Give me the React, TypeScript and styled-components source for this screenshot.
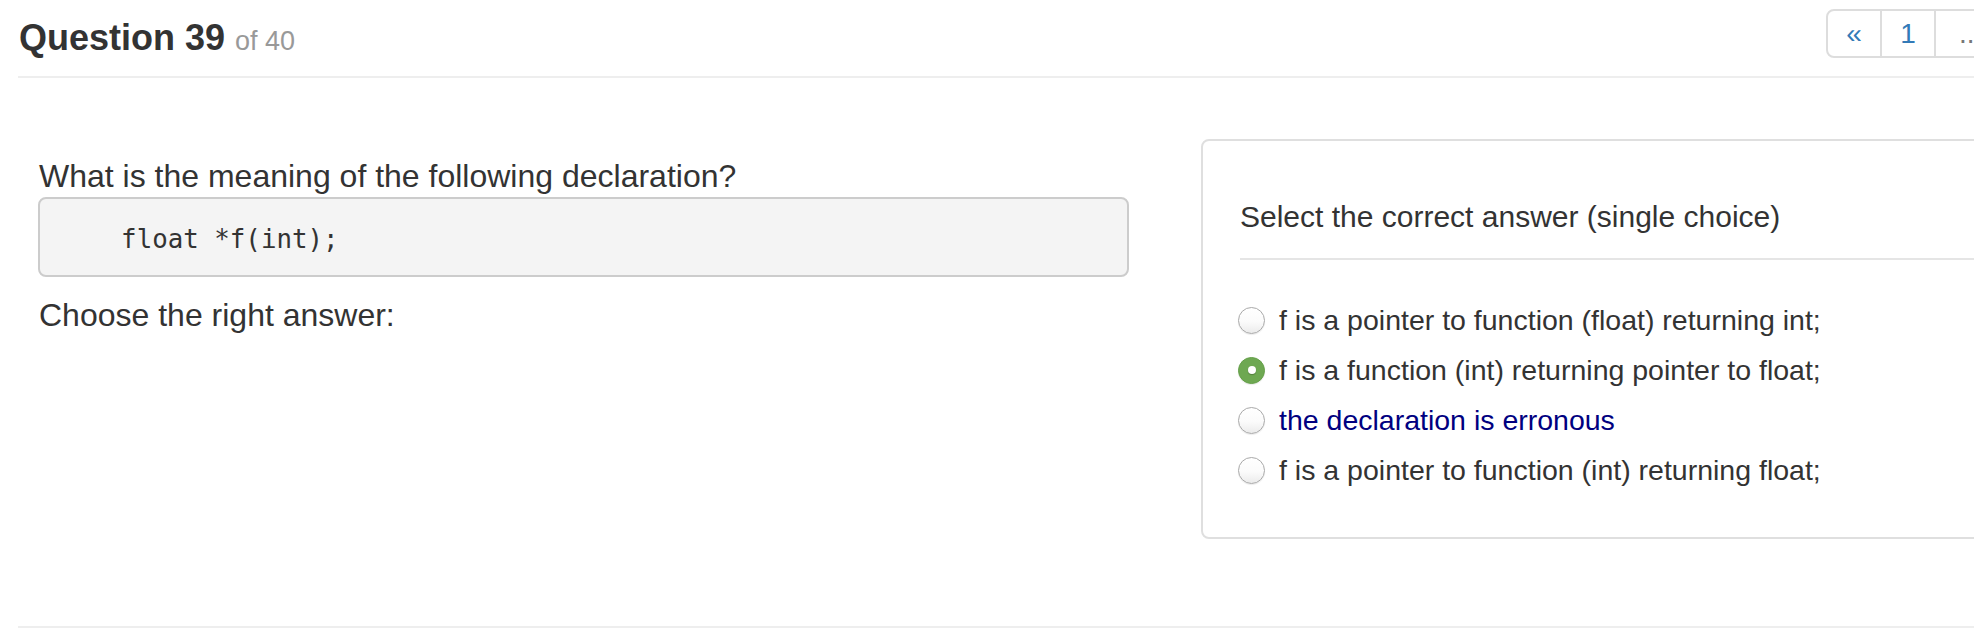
import React from "react";
import styled, { createGlobalStyle } from "styled-components";

const GlobalStyle = createGlobalStyle`
  html, body {
    margin: 0;
    padding: 0;
    background: #ffffff;
  }
  body {
    font-family: "Liberation Sans", Arial, sans-serif;
    color: #333333;
    overflow: hidden;
  }
  *, *::before, *::after {
    box-sizing: border-box;
  }
`;

const Page = styled.div`
  width: 1974px;
  height: 634px;
  overflow: hidden;
  padding-left: 18px;
`;

const Header = styled.header`
  display: flex;
  justify-content: space-between;
  align-items: flex-start;
  height: 78px;
  border-bottom: 2px solid #eeeeee;
`;

const Title = styled.h1`
  margin: 18px 0 0 1px;
  font-size: 36px;
  line-height: 39.6px;
  font-weight: bold;
  color: #333333;
  white-space: nowrap;
`;

const TitleSmall = styled.small`
  font-size: 27px;
  font-weight: normal;
  color: #999999;
`;

const Pagination = styled.ul`
  display: flex;
  list-style: none;
  margin: 9px -24px 0 0;
  padding: 0;
`;

const PageItem = styled.li<{ $w: number; $first?: boolean; $muted?: boolean; $start?: boolean }>`
  display: flex;
  align-items: center;
  justify-content: ${(p) => (p.$start ? "flex-start" : "center")};
  width: ${(p) => p.$w}px;
  height: 49px;
  padding-left: ${(p) => (p.$start ? "23px" : "0")};
  margin-left: ${(p) => (p.$first ? "0" : "-2px")};
  border: 2px solid #dddddd;
  border-radius: ${(p) => (p.$first ? "8px 0 0 8px" : "0")};
  font-size: 28px;
  line-height: 1;
  color: ${(p) => (p.$muted ? "#777777" : "#337ab7")};
  background: #ffffff;
`;

const Main = styled.main`
  display: flex;
  align-items: flex-start;
  margin-top: 61px;
`;

const LeftCol = styled.section`
  flex: none;
  width: 1111px;
  padding: 15px 0 0 20px;
`;

const QuestionText = styled.p`
  margin: 0 0 0 1px;
  font-size: 32px;
  line-height: 44px;
  color: #333333;
`;

const CodeBlock = styled.pre`
  margin: -1px 0 0;
  padding: 21px 19px 17px;
  border: 2px solid #cccccc;
  border-radius: 8px;
  background: #f4f4f4;
  font-family: "DejaVu Sans Mono", "Liberation Mono", monospace;
  font-size: 25.8px;
  line-height: 38px;
  color: #333333;
  white-space: pre;
`;

const Prompt = styled.p`
  margin: 16px 0 0 1px;
  font-size: 32px;
  line-height: 44px;
  color: #333333;
`;

const Panel = styled.section`
  flex: none;
  width: 900px;
  margin-left: 72px;
  padding: 59px 0 42px 35px;
  border: 2px solid #dfdfdf;
  border-radius: 8px;
`;

const PanelHeading = styled.h3`
  margin: 0 0 0 2px;
  padding-bottom: 25px;
  border-bottom: 2px solid #e5e5e5;
  font-size: 30px;
  line-height: 33px;
  font-weight: normal;
  color: #333333;
`;

const OptionList = styled.div`
  display: flex;
  flex-direction: column;
  margin-top: 35px;
`;

const OptionRow = styled.label<{ $tone?: string }>`
  display: flex;
  align-items: center;
  gap: 14px;
  height: 50px;
  font-size: 28.5px;
  color: ${(p) => p.$tone || "#333333"};
  white-space: nowrap;
`;

const Radio = styled.span<{ $checked?: boolean }>`
  position: relative;
  flex: none;
  width: 27px;
  height: 27px;
  border-radius: 50%;
  border: ${(p) => (p.$checked ? "1px solid #64a048" : "1.5px solid #a9a9a9")};
  background: ${(p) =>
    p.$checked
      ? "#6ea852"
      : "linear-gradient(180deg, #ffffff 0%, #fbfbfb 55%, #ebebeb 100%)"};
  box-shadow: 0 1px 1px rgba(0, 0, 0, 0.08);

  &::after {
    content: "";
    display: ${(p) => (p.$checked ? "block" : "none")};
    position: absolute;
    left: 50%;
    top: 50%;
    width: 8px;
    height: 8px;
    margin: -4px 0 0 -4px;
    border-radius: 50%;
    background: #ffffff;
    box-shadow: 0 1px 1px rgba(0, 0, 0, 0.25);
  }
`;

const FooterRule = styled.hr`
  margin: 87px 0 0;
  border: 0;
  border-top: 2px solid #eeeeee;
  height: 0;
`;

const options = [
  { text: "f is a pointer to function (float) returning int;", checked: false },
  { text: "f is a function (int) returning pointer to float;", checked: true },
  { text: "the declaration is erronous", checked: false, tone: "#000080" },
  { text: "f is a pointer to function (int) returning float;", checked: false },
];

export default function App() {
  return (
    <>
      <GlobalStyle />
      <Page>
        <Header>
          <Title>
            Question 39 <TitleSmall>of 40</TitleSmall>
          </Title>
          <Pagination>
            <PageItem $w={56} $first>«</PageItem>
            <PageItem $w={56}>1</PageItem>
            <PageItem $w={64} $muted $start>...</PageItem>
          </Pagination>
        </Header>
        <Main>
          <LeftCol>
            <QuestionText>What is the meaning of the following declaration?</QuestionText>
            <CodeBlock>{"    float *f(int);"}</CodeBlock>
            <Prompt>Choose the right answer:</Prompt>
          </LeftCol>
          <Panel>
            <PanelHeading>Select the correct answer (single choice)</PanelHeading>
            <OptionList>
              {options.map((o) => (
                <OptionRow key={o.text} $tone={o.tone}>
                  <Radio $checked={o.checked} />
                  {o.text}
                </OptionRow>
              ))}
            </OptionList>
          </Panel>
        </Main>
        <FooterRule />
      </Page>
    </>
  );
}
